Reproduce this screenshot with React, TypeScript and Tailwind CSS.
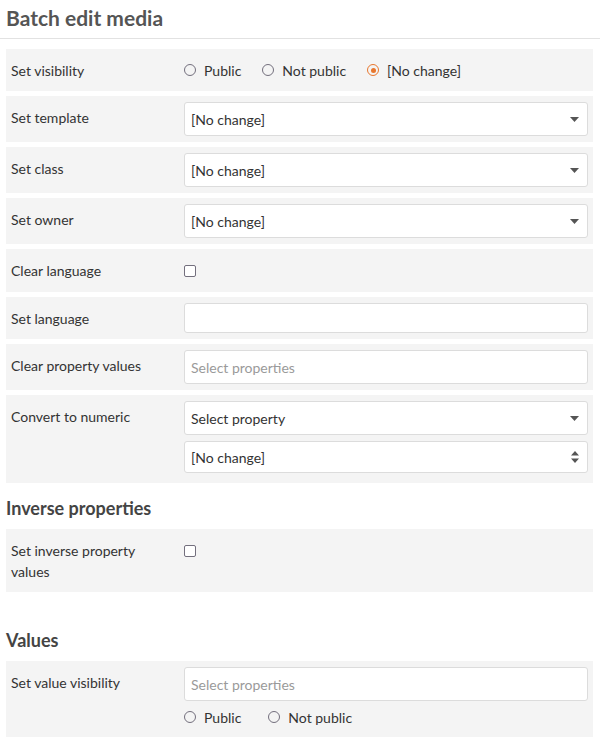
import React from 'react';

function Radio({ label, checked }: { label: string; checked?: boolean }) {
  return (
    <label className="flex items-center gap-[8px]">
      <span
        className={
          checked
            ? 'w-[12px] h-[12px] rounded-full border-[1.5px] border-[#e8772e] flex items-center justify-center'
            : 'w-[12px] h-[12px] rounded-full border-[1.5px] border-[#736f7d]'
        }
      >
        {checked && <span className="w-[5px] h-[5px] rounded-full bg-[#e8772e]" />}
      </span>
      <span>{label}</span>
    </label>
  );
}

function Checkbox() {
  return <span className="block w-[12px] h-[12px] rounded-[2px] border-[1.5px] border-[#736f7d] bg-white" />;
}

function Caret() {
  return (
    <svg width="9" height="5" viewBox="0 0 9 5" className="text-[#555]">
      <path d="M0 0h9L4.5 5z" fill="currentColor" />
    </svg>
  );
}

function Spinner() {
  return (
    <svg width="8" height="12" viewBox="0 0 8 12" className="text-[#555]">
      <path d="M0 4.5h8L4 0z M0 7.5h8L4 12z" fill="currentColor" />
    </svg>
  );
}

function Select({ value, spin, h = 'h-[34px]' }: { value: string; spin?: boolean; h?: string }) {
  return (
    <div className={`${h} bg-white border border-[#dcdcdc] rounded-[3px] flex items-center justify-between pl-[6px] pr-[8px]`}>
      <span>{value}</span>
      {spin ? <Spinner /> : <Caret />}
    </div>
  );
}

function Input({ placeholder, h = 'h-[34px]' }: { placeholder?: string; h?: string }) {
  return (
    <div className={`${h} bg-white border border-[#dcdcdc] rounded-[3px] flex items-center pl-[6px] text-[#9a9a9a]`}>
      {placeholder}
    </div>
  );
}

function Row({ label, children, className = 'py-[6px]' }: { label: string; children: React.ReactNode; className?: string }) {
  return (
    <div className={`bg-[#f4f4f4] flex pl-[5px] pr-[5px] ${className}`}>
      <div className="w-[173px] shrink-0 pr-[30px] pt-[5px] leading-[21px] text-[#333]">{label}</div>
      <div className="flex-1 flex flex-col">{children}</div>
    </div>
  );
}

export default function App() {
  return (
    <div className="w-[600px] bg-white text-[14px] text-[#333]" style={{ fontFamily: 'Lato, "Open Sans", sans-serif' }}>
      <div className="border-b border-[#e2e2e2] px-[6px] pt-[4px] pb-[6px]">
        <h1 className="text-[21px] font-bold leading-[28px] text-[#555]">Batch edit media</h1>
      </div>
      <div className="pl-[6px] pr-[7px] pt-[10px] flex flex-col gap-[5px]">
        <Row label="Set visibility">
          <div className="h-[30px] flex items-center gap-[21px]">
            <Radio label="Public" />
            <Radio label="Not public" />
            <Radio label="[No change]" checked />
          </div>
        </Row>
        <Row label="Set template">
          <Select value="[No change]" />
        </Row>
        <Row label="Set class">
          <Select value="[No change]" />
        </Row>
        <Row label="Set owner">
          <Select value="[No change]" />
        </Row>
        <Row label="Clear language">
          <div className="h-[31px] flex items-center">
            <Checkbox />
          </div>
        </Row>
        <Row label="Set language">
          <Input h="h-[30px]" />
        </Row>
        <Row label="Clear property values">
          <Input placeholder="Select properties" />
        </Row>
        <Row label="Convert to numeric" className="pt-[6px] pb-[10px]">
          <div className="flex flex-col gap-[6px]">
            <Select value="Select property" />
            <Select value="[No change]" spin h="h-[32px]" />
          </div>
        </Row>
      </div>

      <h2 className="px-[6px] mt-[12px] mb-[7px] text-[18px] font-bold leading-[27px] text-[#444]">Inverse properties</h2>
      <div className="pl-[6px] pr-[7px]">
        <Row label="Set inverse property values" className="pt-[6px] pb-[10px]">
          <div className="h-[32px] flex items-center">
            <Checkbox />
          </div>
        </Row>
      </div>

      <h2 className="px-[6px] mt-[35px] mb-[7px] text-[18px] font-bold leading-[27px] text-[#444]">Values</h2>
      <div className="pl-[6px] pr-[7px]">
        <Row label="Set value visibility" className="pt-[6px] pb-[4px]">
          <Input placeholder="Select properties" />
          <div className="h-[32px] flex items-center gap-[27px]">
            <Radio label="Public" />
            <Radio label="Not public" />
          </div>
        </Row>
      </div>
    </div>
  );
}
